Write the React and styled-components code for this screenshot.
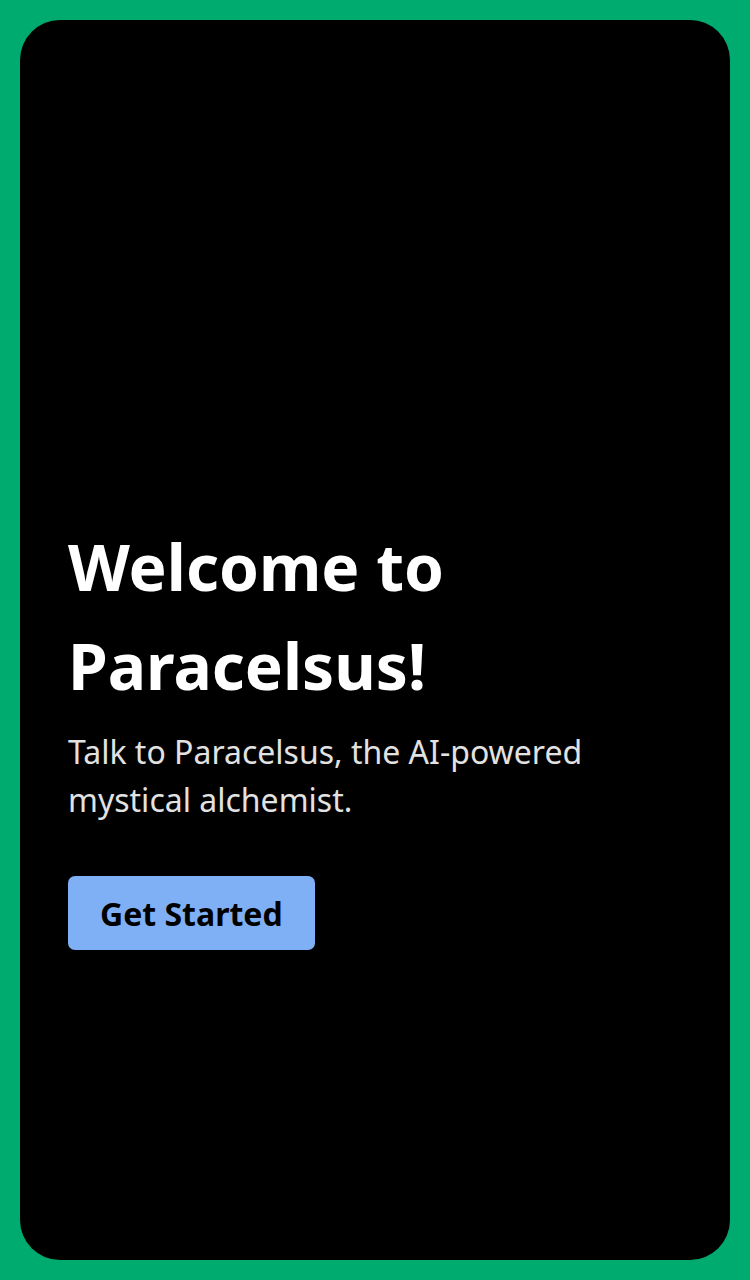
import React from "react";
import styled, { createGlobalStyle } from "styled-components";

const Global = createGlobalStyle`
  html, body { margin: 0; padding: 0; }
  body { background: #00ab6f; font-family: "Noto Sans", "Open Sans", sans-serif; }
`;

const Page = styled.div`
  box-sizing: border-box;
  width: 750px;
  height: 1280px;
  padding: 20px;
  background: #00ab6f;
  display: flex;
`;

const Card = styled.main`
  flex: 1;
  background: #000;
  border-radius: 40px;
  display: flex;
  flex-direction: column;
  justify-content: center;
  padding: 187px 48px 0;
`;

const Title = styled.h1`
  margin: 0;
  color: #fff;
  font-size: 64px;
  line-height: 99px;
  font-weight: 700;
`;

const Subtitle = styled.p`
  margin: 13px 0 0;
  color: #e2e2e2;
  font-size: 32px;
  line-height: 48px;
  font-weight: 400;
  max-width: 560px;
`;

const Button = styled.button`
  align-self: flex-start;
  margin-top: 52px;
  height: 74px;
  padding: 0 32px;
  border: none;
  border-radius: 7px;
  background: #7fb0f5;
  color: #000;
  font-family: "Noto Sans", sans-serif;
  font-size: 32px;
  font-weight: 700;
  cursor: pointer;
`;

export default function App() {
  return (
    <>
      <Global />
      <Page>
        <Card>
          <Title>
            Welcome to
            <br />
            Paracelsus!
          </Title>
          <Subtitle>Talk to Paracelsus, the AI-powered mystical alchemist.</Subtitle>
          <Button>Get Started</Button>
        </Card>
      </Page>
    </>
  );
}
